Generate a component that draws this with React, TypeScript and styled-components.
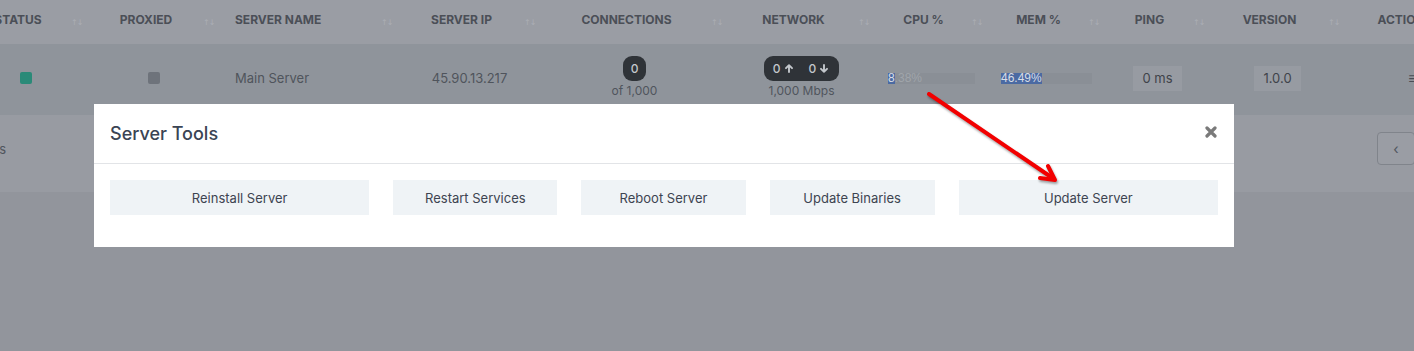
import React from "react";
import styled, { createGlobalStyle } from "styled-components";

const GlobalStyle = createGlobalStyle`
  html, body { margin: 0; padding: 0; background: #92959c; }
  body { font-family: Inter, "Noto Sans", sans-serif; }
  * { box-sizing: border-box; }
`;

const COLS =
  "164px 124px 132px 178px 143px 187px 147px 113px 117px 105px 135px 136px 1fr";

const Page = styled.div`
  position: relative;
  width: 1414px;
  height: 351px;
  overflow: hidden;
  background: #92959c;
`;

/* horizontally scrolled table content */
const Scroller = styled.div`
  width: 1705px;
  margin-left: -200px;
`;

const HeadRow = styled.div`
  display: grid;
  grid-template-columns: ${COLS};
  height: 44px;
  background: #9a9da4;
`;

const HeadCell = styled.div<{ $left?: boolean }>`
  display: grid;
  grid-template-columns: 1fr 8px;
  column-gap: 9px;
  align-items: center;
  padding: 0 9px 5px ${(p) => (p.$left ? "15px" : "10px")};
`;

const HeadLabel = styled.span<{ $left?: boolean }>`
  font-size: 12px;
  font-weight: 700;
  color: #4b4f57;
  text-transform: uppercase;
  white-space: nowrap;
  text-align: ${(p) => (p.$left ? "left" : "center")};
`;

const SortIcon = styled.span`
  font-family: "DejaVu Sans", sans-serif;
  font-size: 8px;
  letter-spacing: -1px;
  color: #abaeb5;
  margin-top: 5px;
  white-space: nowrap;
`;

const DataRow = styled.div`
  display: grid;
  grid-template-columns: ${COLS};
  height: 71px;
  background: #8f949b;
`;

const Cell = styled.div<{ $left?: boolean }>`
  display: flex;
  flex-direction: column;
  justify-content: center;
  align-items: ${(p) => (p.$left ? "flex-start" : "center")};
  padding: 0 ${(p) => (p.$left ? "15px" : "10px")} 3px;
  font-size: 13px;
  color: #4f545c;
  white-space: nowrap;
`;

const StackCell = styled(Cell)`
  padding-bottom: 6px;
`;

const Square = styled.span<{ $color: string }>`
  width: 12px;
  height: 12px;
  border-radius: 2px;
  background: ${(p) => p.$color};
`;

const Badge = styled.span`
  display: inline-flex;
  align-items: center;
  height: 25px;
  padding: 0 8px;
  border-radius: 9px;
  background: #2f3338;
  color: #c3c7cc;
  font-size: 12px;
  font-weight: 500;
`;

const NetBadge = styled(Badge)`
  padding: 0 11px 0 9px;
  gap: 4px;
`;

const NetGap = styled.span`
  width: 8px;
`;

const SubText = styled.span`
  font-size: 12px;
  color: #50555d;
  margin-top: 2px;
  line-height: 15px;
`;

const Bar = styled.div<{ $w: number }>`
  width: ${(p) => p.$w}px;
  height: 11px;
  background: #8a8f96;
  font-family: "Liberation Sans", Arial, sans-serif;
  font-size: 12px;
  line-height: 11px;
  color: #a0a5ab;
  display: flex;
`;

const Selected = styled.span`
  background: #4b6aa2;
  color: #d9dee6;
`;

const Pill = styled.span`
  display: inline-flex;
  align-items: center;
  justify-content: center;
  height: 25px;
  padding: 0 9px;
  background: #979ba2;
  color: #3f434a;
  font-size: 13px;
`;

const ActionIcon = styled.span`
  font-size: 16px;
  color: #4a4e56;
`;

const Footer = styled.div`
  height: 77px;
  background: #989ba2;
  display: flex;
  align-items: center;
  justify-content: space-between;
  padding: 0 16px 10px;
`;

const Info = styled.div`
  width: 190px;
  text-align: right;
  white-space: nowrap;
  font-size: 13px;
  color: #50555d;
`;

const Pagination = styled.div`
  display: flex;
`;

const PageBtn = styled.span<{ $active?: boolean }>`
  width: 38px;
  height: 33px;
  display: flex;
  align-items: center;
  justify-content: center;
  border: 1px solid ${(p) => (p.$active ? "#4a5f85" : "#80848b")};
  border-radius: 4px;
  margin-left: -1px;
  background: ${(p) => (p.$active ? "#4a5f85" : "#9a9da4")};
  color: ${(p) => (p.$active ? "#dde3ec" : "#50555d")};
  font-size: 14px;
`;

/* modal */
const Modal = styled.div`
  position: absolute;
  top: 104px;
  left: 94px;
  width: 1140px;
  background: #ffffff;
`;

const ModalHeader = styled.div`
  height: 60px;
  border-bottom: 1px solid #e2e4e7;
  display: flex;
  align-items: center;
  justify-content: space-between;
  padding: 0 17px 0 16px;
`;

const ModalTitle = styled.h5`
  margin: 0;
  font-size: 18px;
  font-weight: 500;
  color: #3a4454;
`;

const CloseBtn = styled.span`
  display: flex;
  margin-bottom: 4px;
`;

const ModalBody = styled.div`
  display: grid;
  grid-template-columns: 259fr 164fr 164fr 165fr 259fr;
  column-gap: 24px;
  padding: 16px 16px 32px;
`;

const ToolButton = styled.button`
  height: 35px;
  border: none;
  background: #eff3f6;
  font-family: Inter, "Noto Sans", sans-serif;
  font-size: 13px;
  color: #3d4451;
  padding: 0;
`;

const ArrowLayer = styled.svg`
  position: absolute;
  left: 0;
  top: 0;
  pointer-events: none;
  filter: drop-shadow(1px 2px 1px rgba(0, 0, 0, 0.35));
`;

const Arrow = ({ dir }: { dir: "up" | "down" }) => (
  <svg width="8" height="9" viewBox="0 0 8 9">
    <g
      transform={dir === "down" ? "rotate(180 4 4.5)" : undefined}
      stroke="#c3c7cc"
      strokeWidth="1.9"
      fill="none"
      strokeLinecap="round"
      strokeLinejoin="round"
    >
      <path d="M4 1.2 V8 M1 4.2 L4 1.2 L7 4.2" />
    </g>
  </svg>
);

const headers: { label: string; left?: boolean }[] = [
  { label: "ID" },
  { label: "Status" },
  { label: "Proxied" },
  { label: "Server Name", left: true },
  { label: "Server IP" },
  { label: "Connections" },
  { label: "Network" },
  { label: "CPU %" },
  { label: "Mem %" },
  { label: "Ping" },
  { label: "Version" },
  { label: "Actions" },
];

const tools = [
  "Reinstall Server",
  "Restart Services",
  "Reboot Server",
  "Update Binaries",
  "Update Server",
];

export default function App() {
  return (
    <Page>
      <GlobalStyle />
      <Scroller>
        <HeadRow>
          {headers.map((h, i) => (
            <HeadCell key={h.label} $left={h.left}>
              <HeadLabel $left={h.left}>{h.label}</HeadLabel>
              {i < headers.length - 1 ? <SortIcon>↑↓</SortIcon> : <span />}
            </HeadCell>
          ))}
          <div />
        </HeadRow>
        <DataRow>
          <Cell>1</Cell>
          <Cell>
            <Square $color="#2a8a78" />
          </Cell>
          <Cell>
            <Square $color="#6e737b" />
          </Cell>
          <Cell $left>Main Server</Cell>
          <Cell>45.90.13.217</Cell>
          <StackCell>
            <Badge>0</Badge>
            <SubText>of 1,000</SubText>
          </StackCell>
          <StackCell>
            <NetBadge>
              0 <Arrow dir="up" />
              <NetGap />0 <Arrow dir="down" />
            </NetBadge>
            <SubText>1,000 Mbps</SubText>
          </StackCell>
          <Cell>
            <Bar $w={87}>
              <Selected>8</Selected>.38%
            </Bar>
          </Cell>
          <Cell>
            <Bar $w={91}>
              <Selected>46.49%</Selected>
            </Bar>
          </Cell>
          <Cell>
            <Pill>0 ms</Pill>
          </Cell>
          <Cell>
            <Pill>1.0.0</Pill>
          </Cell>
          <Cell>
            <ActionIcon>≡</ActionIcon>
          </Cell>
          <div />
        </DataRow>
        <Footer>
          <Info>Showing 1 to 1 of 1 entries</Info>
          <Pagination>
            <PageBtn>‹</PageBtn>
            <PageBtn $active>1</PageBtn>
            <PageBtn>›</PageBtn>
          </Pagination>
        </Footer>
      </Scroller>

      <Modal>
        <ModalHeader>
          <ModalTitle>Server Tools</ModalTitle>
          <CloseBtn>
            <svg width="12" height="12" viewBox="0 0 12 12">
              <path
                d="M2 2 L10 10 M10 2 L2 10"
                stroke="#7a7a7a"
                strokeWidth="3.2"
                strokeLinecap="round"
              />
            </svg>
          </CloseBtn>
        </ModalHeader>
        <ModalBody>
          {tools.map((t) => (
            <ToolButton key={t}>{t}</ToolButton>
          ))}
        </ModalBody>
      </Modal>

      <ArrowLayer width="1414" height="351" viewBox="0 0 1414 351">
        <g stroke="#f20000" strokeWidth="4" strokeLinecap="round" fill="none">
          <path d="M929 94 L1054 179" />
          <path d="M1040 178 L1055 180 L1048 166" strokeLinejoin="round" />
        </g>
      </ArrowLayer>
    </Page>
  );
}
